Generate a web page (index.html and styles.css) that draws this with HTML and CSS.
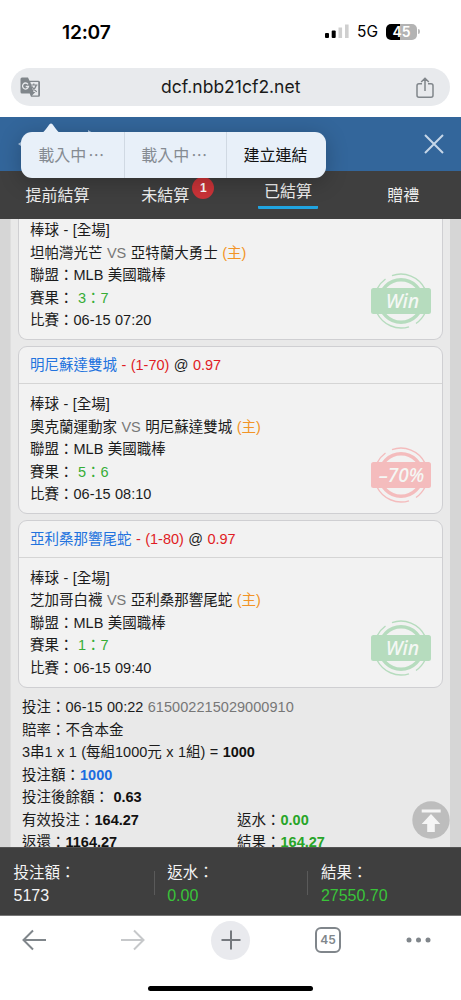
FILE: index.html
```html
<!DOCTYPE html>
<html lang="zh-Hant">
<head>
<meta charset="utf-8">
<title>已結算</title>
<link rel="stylesheet" href="styles.css">
</head>
<body>
<svg class="defs" width="0" height="0">
  <defs>
    <g id="ring" fill="none" stroke="currentColor">
      <circle cx="30" cy="29" r="21.300" stroke-width="3.400"/>
      <path d="M21 3.600A27 27 0 0 1 54 17M6 17A27 27 0 0 1 14.500 7M6 41A27 27 0 0 0 38 54.800M45 51.500A27 27 0 0 0 54 41" stroke-width="1.400"/>
    </g>
  </defs>
</svg>
<div class="screen">
  <header class="status">
    <span class="clock">12:07</span>
    <span class="signals">
      <svg width="24" height="16" viewBox="0 0 24 16"><rect x="0" y="9" width="4" height="5" rx="1"/><rect x="6.700" y="6.500" width="4" height="7.500" rx="1"/><path fill="#cfcfcf" d="M13.500 3.500h3.600v10.500h-3.600zM20 .500h3.600V14H20z"/></svg>
      <span class="net">5G</span>
      <span class="battery">45</span><span class="nub"></span>
    </span>
  </header>
  <div class="address">
    <svg width="21" height="21" viewBox="0 0 21 21"><path d="M2 .500h6l1.500 3.200h9a1.500 1.500 0 0 1 1.500 1.500v13a1.500 1.500 0 0 1-1.500 1.500H11L9.700 16.500H2A1.500 1.500 0 0 1 .500 15V2A1.500 1.500 0 0 1 2 .500z" fill="#80868b"/><path d="M10.300 5h7.900v13.400H12l3.400-3.400h-1.900z" fill="#e8eaed"/><path d="M8 7.300A3 3 0 1 0 8.500 9.500H5.700" fill="none" stroke="#e8eaed" stroke-width="1.300"/><path d="M10.500 8h7M13.800 6.500V8M16.300 8c-.6 2.700-2.400 4.600-4.600 6M12 9.500c1 2 2.700 4 4.800 5.300" fill="none" stroke="#80868b" stroke-width="1.200"/></svg>
    <span class="url">dcf.nbb21cf2.net</span>
    <svg width="18" height="21" viewBox="0 0 18 21" fill="none" stroke="#80868b" stroke-width="1.500"><path d="M6 6.700H3A2 2 0 0 0 1 8.700v9.500a2 2 0 0 0 2 2h12a2 2 0 0 0 2-2V8.700a2 2 0 0 0-2-2h-3M9 14V1.300M5.200 5 9 1.200 12.800 5"/></svg>
  </div>
  <div class="titlebar">
    <svg class="nav" width="80" height="34" viewBox="0 0 80 34"><path d="M6 13 0 17l6 4zM70 3l5 3h-5z" fill="#a9c3df"/></svg>
    <svg width="20" height="20" viewBox="0 0 20 20"><path d="m1 1 18 18M19 1 1 19" stroke="#c6d7e8" stroke-width="2"/></svg>
    <div class="menu"><svg class="tip" width="20" height="10" viewBox="0 0 20 10"><path d="M0 10C4 9 6 4 8.500 1.200q1.500-1.400 3 0C14 4 16 9 20 10z" fill="#e8f0f9"/></svg><span>載入中<i>⋯</i></span><span>載入中<i>⋯</i></span><span class="ready">建立連結</span></div>
  </div>
  <nav class="tabs">
    <div class="tab">提前結算</div>
    <div class="tab pending"><span>未結算<b class="badge">1</b></span></div>
    <div class="tab active"><span>已結算</span></div>
    <div class="tab">贈禮</div>
  </nav>
  <main class="view">
    <div class="sheet">
      <section class="card cut">
        <div class="body">
          <p>棒球 - [全場]</p>
          <p>坦帕灣光芒 <span class="vs">VS</span> 亞特蘭大勇士 <span class="home">(主)</span></p>
          <p>聯盟：MLB 美國職棒</p>
          <p>賽果： <span class="score">3：7</span></p>
          <p>比賽：06-15 07:20</p>
        </div>
        <svg class="stamp win" width="60" height="58" viewBox="0 0 60 58"><use href="#ring"/><rect y="16" width="60" height="26" rx="2.500" fill="currentColor"/><text x="31.500" y="36">Win</text></svg>
      </section>
      <section class="card">
        <h2><span class="pick">明尼蘇達雙城</span> <span class="odds">- (1-70)</span> @ <span class="odds">0.97</span></h2>
        <div class="body">
          <p>棒球 - [全場]</p>
          <p>奧克蘭運動家 <span class="vs">VS</span> 明尼蘇達雙城 <span class="home">(主)</span></p>
          <p>聯盟：MLB 美國職棒</p>
          <p>賽果： <span class="score">5：6</span></p>
          <p>比賽：06-15 08:10</p>
        </div>
        <svg class="stamp loss" width="60" height="58" viewBox="0 0 60 58"><use href="#ring"/><rect y="16" width="60" height="26" rx="2.500" fill="currentColor"/><text class="pct" x="30.500" y="35.500">–70%</text></svg>
      </section>
      <section class="card">
        <h2><span class="pick">亞利桑那響尾蛇</span> <span class="odds">- (1-80)</span> @ <span class="odds">0.97</span></h2>
        <div class="body">
          <p>棒球 - [全場]</p>
          <p>芝加哥白襪 <span class="vs">VS</span> 亞利桑那響尾蛇 <span class="home">(主)</span></p>
          <p>聯盟：MLB 美國職棒</p>
          <p>賽果： <span class="score">1：7</span></p>
          <p>比賽：06-15 09:40</p>
        </div>
        <svg class="stamp win" width="60" height="58" viewBox="0 0 60 58"><use href="#ring"/><rect y="16" width="60" height="26" rx="2.500" fill="currentColor"/><text x="31.500" y="36">Win</text></svg>
      </section>
      <section class="summary">
        <p>投注：06-15 00:22 <span class="vs serial">615002215029000910</span></p>
        <p>賠率：不含本金</p>
        <p>3串1 x 1 (每組1000元 x 1組) = <b>1000</b></p>
        <p>投注額：<b class="stake">1000</b></p>
        <p>投注後餘額： <b>0.63</b></p>
        <p class="pair"><span>有效投注：<b>164.27</b></span><span>返水：<b class="gain">0.00</b></span></p>
        <p class="pair"><span>返還：<b>1164.27</b></span><span>結果：<b class="gain">164.27</b></span></p>
      </section>
    </div>
    <svg class="top" width="38" height="38" viewBox="0 0 38 38"><circle cx="19" cy="19" r="18.700" fill="#bdbdbd"/><path d="M9.700 8.500h19v3h-19zM19 13l9.300 10h-5.500v8h-7.600v-8H9.700z" fill="#f5f5f5"/></svg>
  </main>
  <footer class="totals">
    <div><span>投注額：</span><em class="plain">5173</em></div>
    <div><span>返水：</span><em>0.00</em></div>
    <div><span>結果：</span><em>27550.70</em></div>
  </footer>
  <div class="toolbar">
    <svg width="26" height="22" viewBox="0 0 26 22" fill="none" stroke="#80868b" stroke-width="2"><path d="M25 11H2.500M12 1.500 2.500 11l9.500 9.500"/></svg>
    <svg class="forward" width="26" height="22" viewBox="0 0 26 22" fill="none" stroke="#c6c8ca" stroke-width="2"><path d="M1 11h22.500M14 1.500l9.500 9.500-9.500 9.500"/></svg>
    <span class="plus"><svg width="20" height="20" viewBox="0 0 20 20"><path d="M10 .500v19M.500 10h19" stroke="#75797e" stroke-width="2"/></svg></span>
    <span class="count">45</span>
    <svg class="more" width="26" height="6" viewBox="0 0 26 6" fill="#80868b"><circle cx="3" cy="3" r="2.500"/><circle cx="12.500" cy="3" r="2.500"/><circle cx="22" cy="3" r="2.500"/></svg>
  </div>
  <div class="homebar"></div>
</div>
</body>
</html>
```
FILE: styles.css
```css
* { box-sizing: border-box; margin: 0; padding: 0; }
body { background: #fff; font-family: "Liberation Sans", "Noto Sans CJK TC", sans-serif; color: #1b1b1b; }
svg { display: block; flex: none; }
.defs { position: absolute; }
.screen { width: 461px; height: 1000px; display: flex; flex-direction: column; overflow: hidden; }

.status { height: 68px; flex: none; display: flex; justify-content: space-between; align-items: flex-start; padding: 20px 41px 0 62px; font-family: Inter, sans-serif; color: #000; }
.clock { font-size: 19.2px; line-height: 24px; font-weight: 600; letter-spacing: -.2px; }
.signals { display: flex; align-items: center; height: 23px; }
.net { font-size: 15.5px; margin: 0 8px 0 8px; width: 21px; }
.battery { width: 31px; height: 16px; border-radius: 5px; background: linear-gradient(90deg, #000 45%, #b3b3b3 45%); color: #fff; font-size: 14px; line-height: 16px; font-weight: 600; text-align: center; }
.nub { width: 2px; height: 5px; margin-left: 1px; border-radius: 0 2px 2px 0; background: #bbb; }

.address { height: 38px; flex: none; margin: 0 11px 11px; padding: 0 16px 0 8.5px; border-radius: 19px; background: #e8eaed; display: flex; align-items: center; justify-content: space-between; font-family: Inter, sans-serif; }
.url { font-size: 17.5px; line-height: 24px; color: #1a1a1a; padding-left: 5px; }

.titlebar { height: 54px; flex: none; background: #33669b; position: relative; display: flex; align-items: center; justify-content: space-between; padding: 0 17.5px 0 18px; z-index: 2; }
.menu { position: absolute; left: 21px; top: 15px; width: 305px; height: 46px; border-radius: 11px; background: #e8f0f9; display: grid; grid-template-columns: 102.5px 102.5px 1fr; grid-template-rows: 46px; box-shadow: 0 4px 22px rgba(0,0,0,.24); font-size: 16px; line-height: 47px; color: #858b92; }
.menu span { height: 46px; text-align: center; padding-right: 2px; }
.menu span + span { border-left: 1px solid #d0d9e3; }
.menu i { font-style: normal; font-family: "Noto Sans CJK TC", sans-serif; line-height: 1; margin-left: 2px; }
.menu .ready { color: #111; }
.tip { position: absolute; left: 19.5px; top: -9px; }

.tabs { height: 48px; flex: none; background: #3f3f3f; color: #f0f0f0; display: grid; grid-template-columns: repeat(4, 1fr); font-size: 16px; line-height: 49px; text-align: center; }
.pending { padding-right: 15px; }
.pending span { position: relative; }
.badge { position: absolute; left: 51px; top: -10px; width: 22px; height: 22px; border-radius: 50%; background: #cb3338; color: #fff; font-size: 12px; line-height: 22px; }
.active { display: flex; justify-content: center; align-items: flex-start; line-height: 41px; }
.active span { width: 60px; height: 38px; border-bottom: 3px solid #20a4e0; border-radius: 1px; }

.view { height: 628px; flex: none; background: #d6d6d6; position: relative; padding: 0 11px 0 10px; overflow: hidden; }
.sheet { background: #e9e9e9; height: 100%; padding: 0 8px; border-left: 1px solid #dedede; font-size: 14.5px; line-height: 22.5px; word-spacing: .4px; }
.card { position: relative; height: 168px; width: 425px; margin: 0 0 5.7px -1px; border: 1.5px solid #cfcfd2; border-radius: 9px; background: #f2f2f2; }
.cut { height: 121px; border-top: 0; border-radius: 0 0 9px 9px; margin-bottom: 6px; }
.card h2 { font-size: inherit; font-weight: 400; height: 37px; line-height: 37px; padding-left: 11px; border-bottom: 1.5px solid #d5d5d5; }
.card .body { padding: 9px 11px; }
.cut .body { padding-top: 0; }
p { height: 22.5px; white-space: nowrap; }
.pick { color: #2273de; }
.odds { color: #e01b24; }
.vs { color: #777; }
.home { color: #f29426; }
.score { color: #36ad36; }
.serial { letter-spacing: .05px; }
.stamp { position: absolute; right: 11px; bottom: 9.5px; }
.stamp text { fill: #f4f7f4; font-family: "Noto Sans", sans-serif; font-style: italic; font-weight: 500; font-size: 19.5px; text-anchor: middle; }
.stamp .pct { font-size: 19px; }
.win { color: #b6dcbe; }
.loss { color: #f4bcbd; }
.summary { padding: 3px 0 0 3px; }
.summary b { color: #111; }
.summary .stake { color: #1c6ce0; }
.summary .gain { color: #27a527; }
.pair { display: grid; grid-template-columns: 215px 1fr; }
.top { position: absolute; left: 412px; top: 582px; }

.totals { height: 69px; flex: none; background: #3f3f3f; border-top: 1px solid #535353; border-bottom: 1px solid #777; display: grid; grid-template-columns: 153.7px 153.7px 1fr; padding-top: 14px; color: #f4f4f4; }
.totals div { height: 45px; padding-left: 13.5px; display: flex; flex-direction: column; font-size: 15.5px; line-height: 22.5px; background: linear-gradient(#5a5a5a, #5a5a5a) 0 9px / 1px 24px no-repeat; }
.totals div:first-child { background: none; }
.totals em { font-style: normal; font-size: 16px; color: #39c439; }
.totals .plain { color: #f4f4f4; }

.toolbar { height: 46px; flex: none; margin-top: 1px; padding: 0 28px 0 21px; display: grid; grid-template-columns: 99px 91px 104px 91px 26px; align-items: center; }
.plus { width: 39px; height: 39px; border-radius: 50%; background: #e9eaee; display: grid; place-items: center; }
.count { width: 26px; height: 26px; border: 2px solid #80868b; border-radius: 6px; font: 600 12px/22px Inter, sans-serif; text-align: center; color: #80868b; }
.homebar { width: 165px; height: 5px; flex: none; border-radius: 3px; background: #000; margin: 23px 0 0 148px; }
```
